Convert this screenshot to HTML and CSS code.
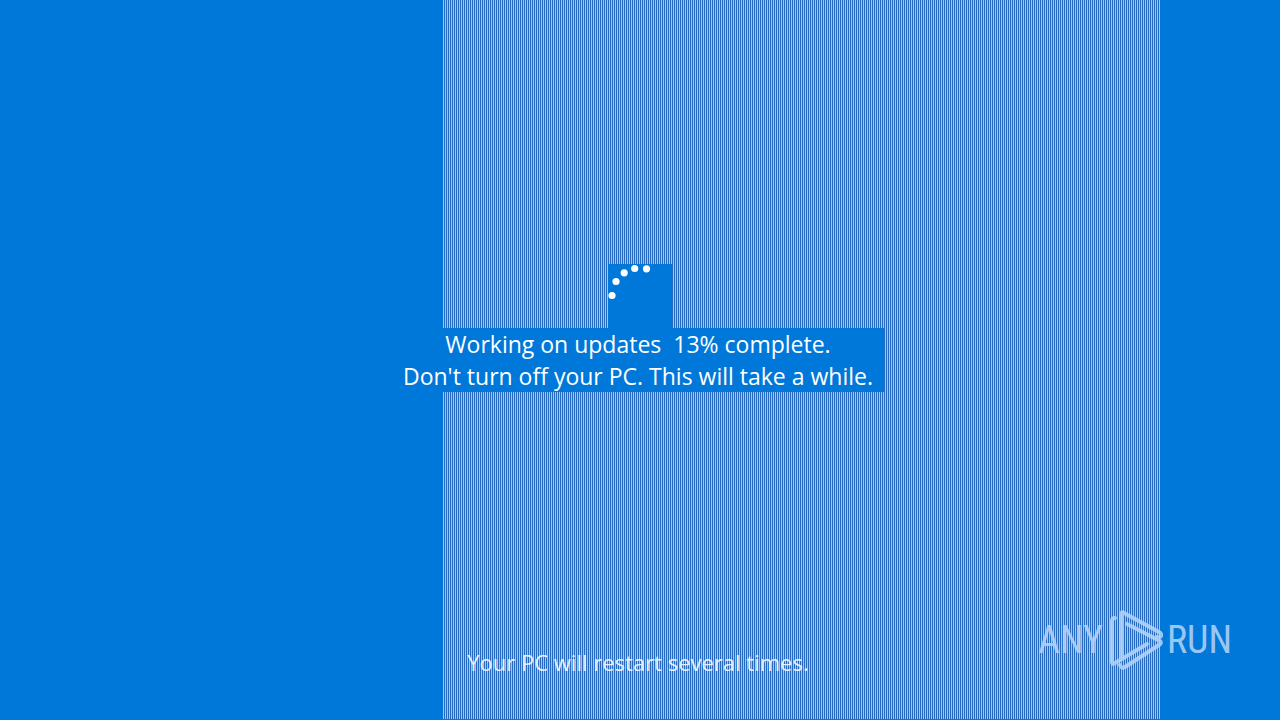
FILE: index.html
```html
<!DOCTYPE html>
<html lang="en">
<head>
  <title>Working on updates</title>
  <meta charset="utf-8" />
  <link rel="stylesheet" href="styles.css">
</head>
<body>

  <div class="stripes"></div>

  <main class="update">
    <svg class="spinner" viewBox="0 0 64 64" role="img" aria-label="Loading">
      <circle cx="4" cy="31.5" r="3.6" />
      <circle cx="8" cy="17.5" r="3.6" />
      <circle cx="16.2" cy="8.8" r="3.6" />
      <circle cx="26.7" cy="4.5" r="3.6" />
      <circle cx="38.5" cy="4.8" r="3.6" />
    </svg>
    <p class="message">Working on updates&nbsp; 13% complete.<br>Don't turn off your PC. This will take a while.</p>
  </main>

  <footer class="restart">Your PC will restart several times.</footer>

  <div class="watermark">
    <span>ANY</span>
    <svg class="play" viewBox="0 0 56 64" aria-hidden="true">
      <path d="M8 10Q5 10 5 13V54Q5 57 8 55L40 36" />
      <path d="M14 51V7Q14 3 17 5L52 24Q55 26 54 28Q53 30 50 29" />
      <path d="M20 16L53 33Q55 35 52 37L18 59Q14 61 13 57" />
    </svg>
    <span>RUN</span>
  </div>

</body>
</html>
```

FILE: styles.css
```css
html, body {
  height: 100%;
  margin: 0;
  overflow: hidden;
}

body {
  position: relative;
  display: flex;
  flex-direction: column;
  background-color: #0078d9;
  color: #fff;
  font-family: "Open Sans", "Noto Sans", sans-serif;
  font-size: 23px;
  line-height: 32px;
}

/* dithered part of the screen */
.stripes {
  position: absolute;
  top: 0;
  right: 120px;
  bottom: 1px;
  left: 443px;
  background: repeating-linear-gradient(90deg, #9cc8f5 0 1px, #2569c1 1px 2px);
}

.update {
  position: relative;
  flex: 1;
  display: flex;
  flex-direction: column;
  align-items: center;
  justify-content: center;
  padding-top: 8px;
}

.spinner {
  width: 64px;
  height: 64px;
  background-color: #0078d9;
  fill: #fff;
}

.message {
  box-sizing: border-box;
  width: 488px;
  margin: 0;
  padding-right: 4px;
  background-color: #0078d9;
  text-align: center;
  white-space: nowrap;
}

.restart {
  position: relative;
  padding: 0 4px 44px 0;
  font-size: 22px;
  line-height: 28px;
  text-align: center;
  opacity: 0.85;
}

.watermark {
  position: absolute;
  right: 48px;
  bottom: 48px;
  display: flex;
  align-items: center;
  gap: 4px;
  color: #b5d5f7;
  font-family: "Roboto Condensed", "Liberation Sans Narrow", "Liberation Sans", sans-serif;
  font-size: 38px;
  font-weight: 400;
  opacity: 0.85;
}

.play {
  width: 56px;
  height: 64px;
  fill: none;
  stroke: #b5d5f7;
  stroke-width: 4;
  stroke-linecap: round;
  stroke-linejoin: round;
}
```
